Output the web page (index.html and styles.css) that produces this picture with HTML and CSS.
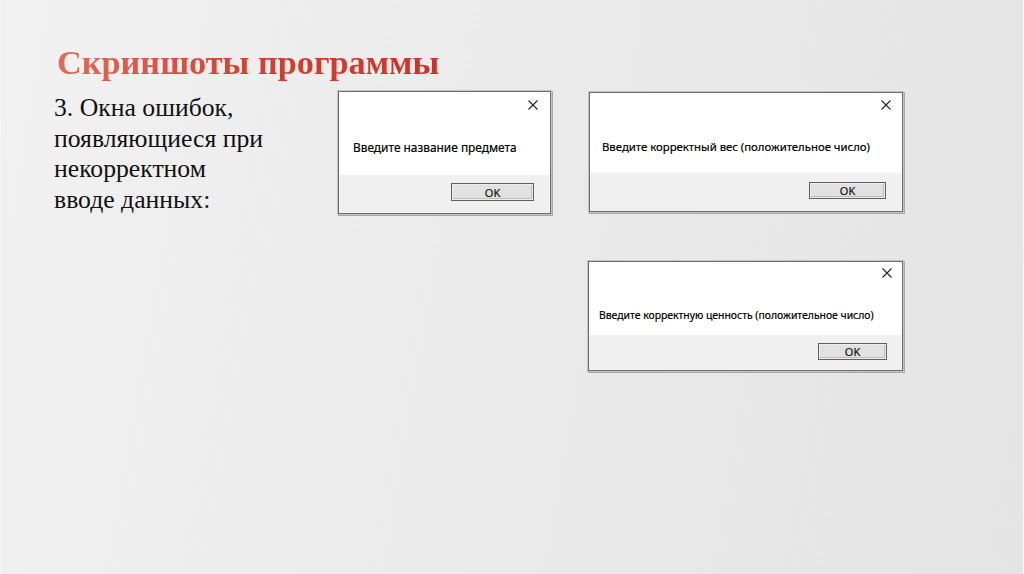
FILE: index.html
```html
<!DOCTYPE html>
<html lang="ru">
<head>
<meta charset="utf-8">
<title>Скриншоты программы</title>
<link rel="stylesheet" href="styles.css">
</head>
<body>
<div class="slide">
  <h1 class="title">Скриншоты программы</h1>
  <p class="lead">3. Окна ошибок,<br>появляющиеся при<br>некорректном<br>вводе данных:</p>

  <div class="dialog d1">
    <div class="dlg-body">
      <div class="close-row"><svg class="close" viewBox="0 0 10 10"><path d="M0.5 0.5L9.5 9.5M9.5 0.5L0.5 9.5"/></svg></div>
      <div class="msg">Введите название предмета</div>
    </div>
    <div class="dlg-foot"><div class="ok">OK</div></div>
  </div>

  <div class="dialog d2">
    <div class="dlg-body">
      <div class="close-row"><svg class="close" viewBox="0 0 10 10"><path d="M0.5 0.5L9.5 9.5M9.5 0.5L0.5 9.5"/></svg></div>
      <div class="msg">Введите корректный вес (положительное число)</div>
    </div>
    <div class="dlg-foot"><div class="ok">OK</div></div>
  </div>

  <div class="dialog d3">
    <div class="dlg-body">
      <div class="close-row"><svg class="close" viewBox="0 0 10 10"><path d="M0.5 0.5L9.5 9.5M9.5 0.5L0.5 9.5"/></svg></div>
      <div class="msg">Введите корректную ценность (положительное число)</div>
    </div>
    <div class="dlg-foot"><div class="ok">OK</div></div>
  </div>
</div>
</body>
</html>
```
FILE: styles.css
```css
html, body {
  margin: 0;
  padding: 0;
}
body {
  width: 1024px;
  height: 574px;
  overflow: hidden;
}
.slide {
  position: relative;
  width: 1024px;
  height: 574px;
  box-sizing: border-box;
  background: linear-gradient(100deg, #f1f1f1 0%, #ebebeb 45%, #e4e4e4 100%);
  border-left: 1px solid #f6f6f6;
  border-right: 1px solid #f6f6f6;
  padding: 40px 0 0 56px;
}
.title {
  margin: 0;
  font-family: "Liberation Serif", "Times New Roman", serif;
  font-weight: bold;
  font-size: 34.3px;
  line-height: 44px;
  color: #d43c30;
  background: linear-gradient(90deg, #e26a58 0%, #d6402f 50%, #cf3128 100%);
  -webkit-background-clip: text;
  background-clip: text;
  -webkit-text-fill-color: transparent;
  display: inline-block;
}
.lead {
  margin: 9px 0 0 -3px;
  font-family: "Liberation Serif", "Times New Roman", serif;
  font-size: 25.7px;
  line-height: 30.7px;
  color: #111;
}
.dialog {
  position: absolute;
  box-sizing: border-box;
  border: 1px solid #6e6e6e;
  box-shadow: 0 0 0 1px #c2c2c2, 1px 1px 0 1px #a9a9a9;
  background: #f0f0f0;
  display: flex;
  flex-direction: column;
  font-family: "Noto Sans", "Open Sans", sans-serif;
  color: #000;
}
.dlg-body {
  background: #fff;
  display: flex;
  flex-direction: column;
  box-sizing: border-box;
}
.close-row {
  display: flex;
  justify-content: flex-end;
  height: 10px;
}
.close {
  width: 10px;
  height: 10px;
  stroke: #222;
  stroke-width: 1.1;
  fill: none;
}
.msg {
  line-height: 14px;
  white-space: nowrap;
  -webkit-text-stroke: 0.2px #000;
}
.dlg-foot {
  flex: 1;
  display: flex;
  justify-content: flex-end;
  align-items: flex-start;
  box-sizing: border-box;
}
.ok {
  box-sizing: border-box;
  border: 1px solid #5f5f5f;
  box-shadow: inset 0 0 0 1px #ededed, inset -1px -1px 0 1px #bdbdbd;
  background: #e1e1e1;
  font-size: 11px;
  display: flex;
  align-items: center;
  justify-content: center;
  color: #111;
  -webkit-text-stroke: 0.2px #111;
}

/* dialog 1 */
.d1 { left: 337px; top: 91px; width: 213px; height: 123px; }
.d1 .dlg-body { height: 83px; padding: 8px 12px 0 14px; }
.d1 .msg { margin-top: 30px; font-size: 11.9px; }
.d1 .dlg-foot { padding: 8px 16px 0 0; }
.d1 .ok { width: 83px; height: 18px; }

/* dialog 2 */
.d2 { left: 588px; top: 92px; width: 314px; height: 120px; }
.d2 .dlg-body { height: 80px; padding: 7px 11px 0 12px; }
.d2 .msg { margin-top: 30px; font-size: 11.35px; }
.d2 .dlg-foot { padding: 9px 16px 0 0; }
.d2 .ok { width: 77px; height: 17px; }

/* dialog 3 */
.d3 { left: 587px; top: 261px; width: 315px; height: 110px; }
.d3 .dlg-body { height: 73px; padding: 6px 10px 0 10px; }
.d3 .msg { margin-top: 30px; font-size: 10.4px; }
.d3 .dlg-foot { padding: 8px 15px 0 0; }
.d3 .ok { width: 69px; height: 17px; }
```
